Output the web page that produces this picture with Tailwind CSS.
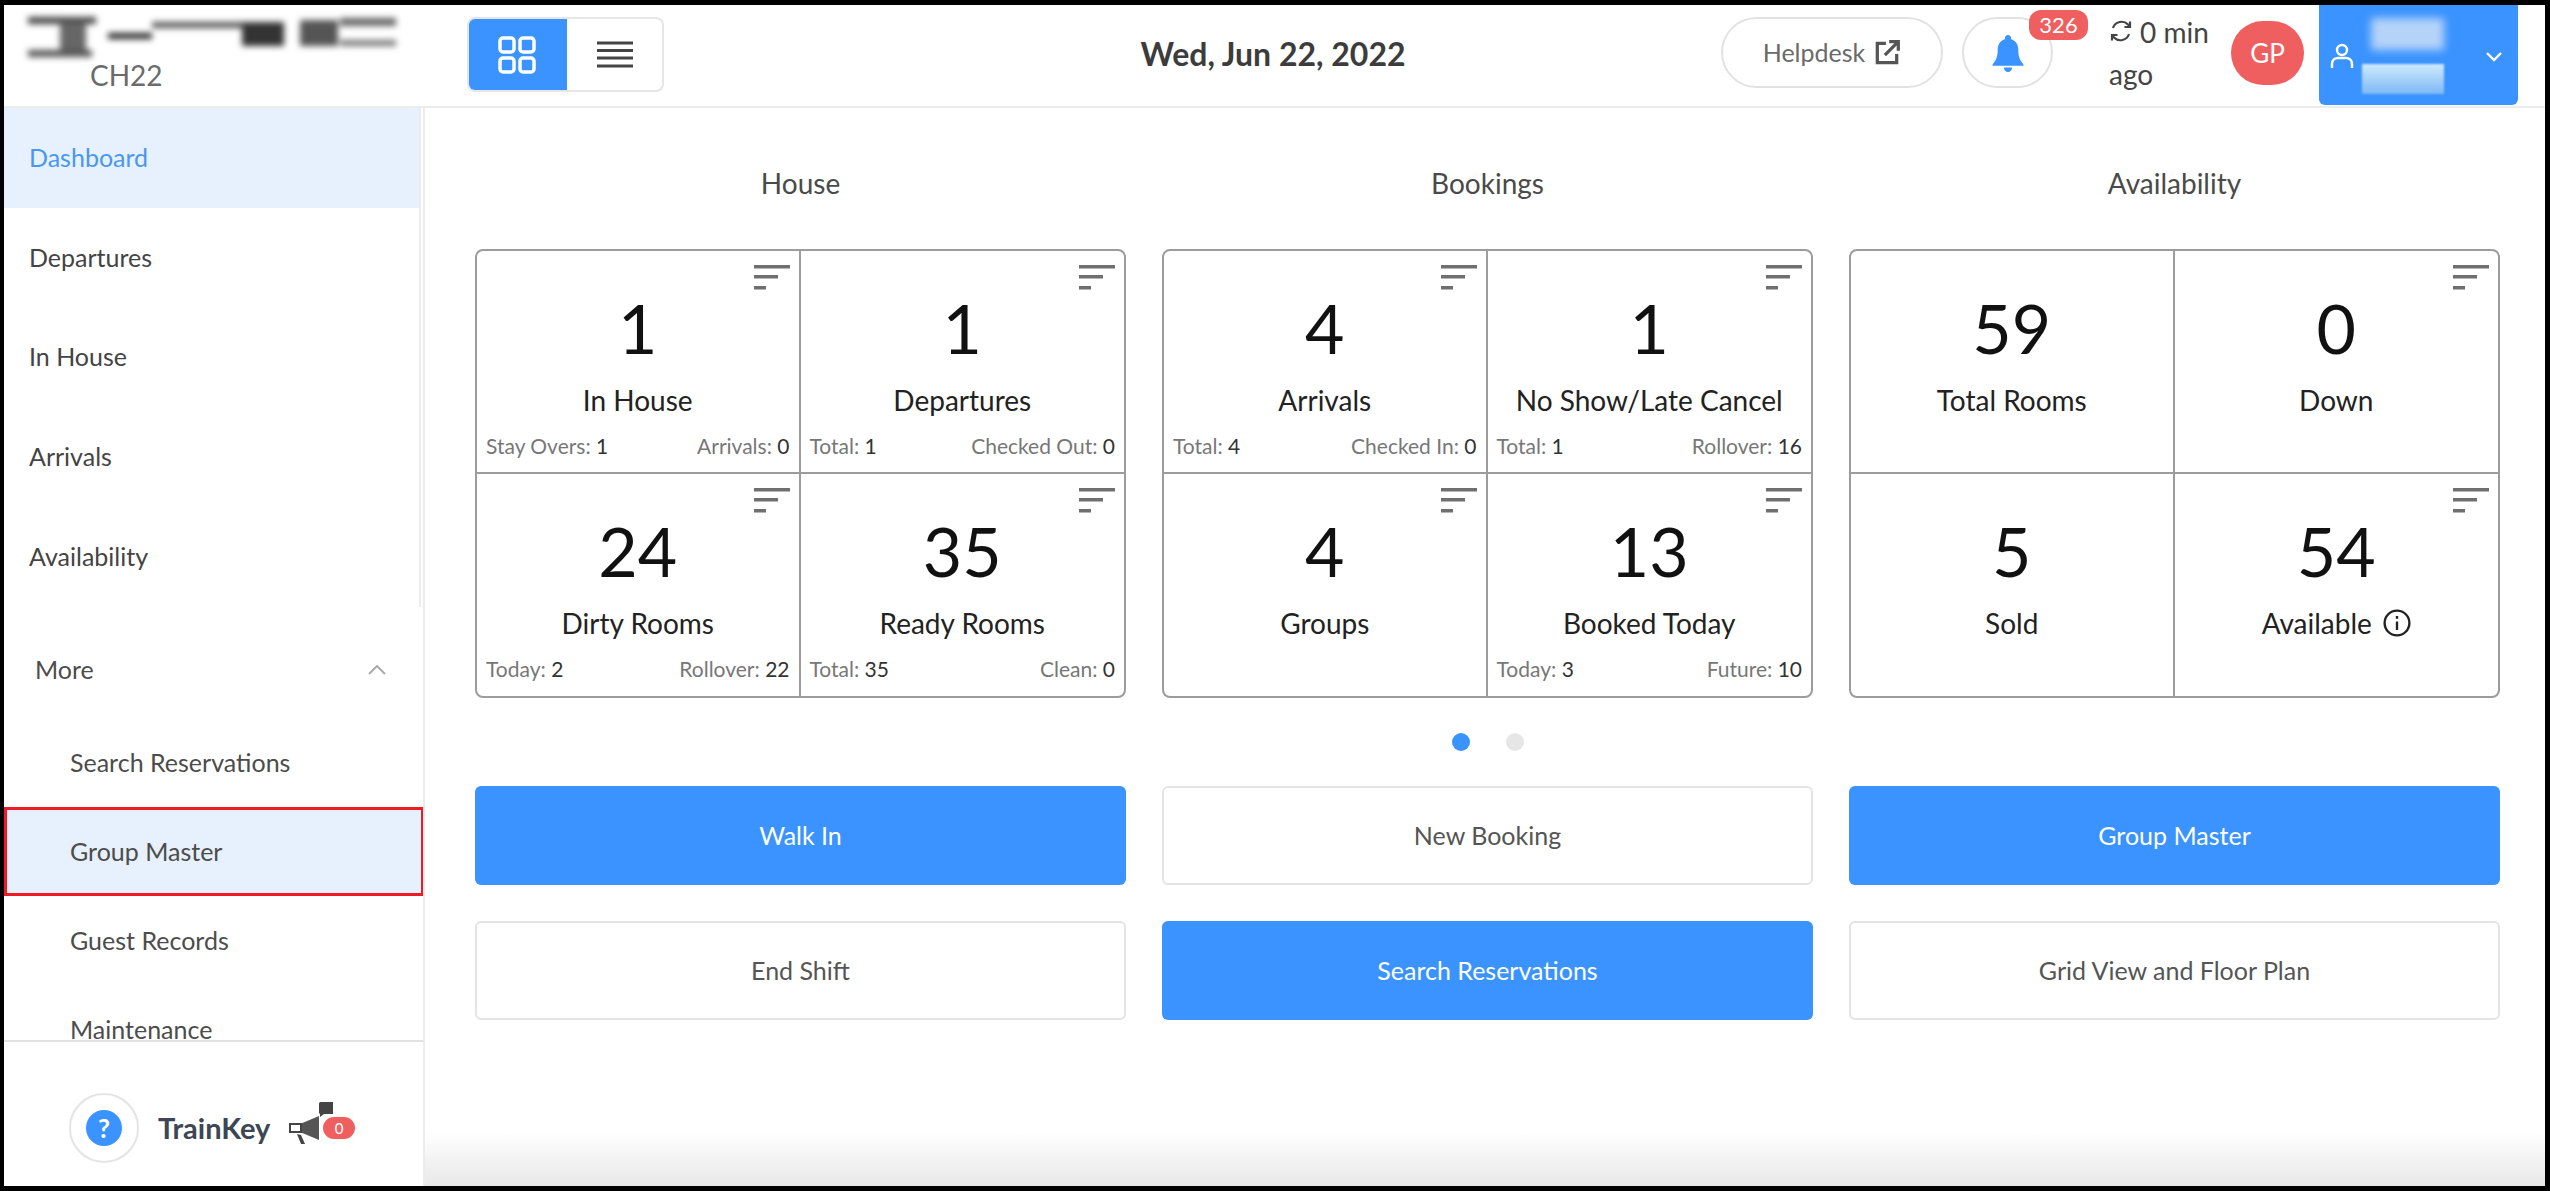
<!DOCTYPE html>
<html lang="en">
<head>
  <meta charset="UTF-8" />
  <title>Dashboard</title>
  <script src="https://cdn.jsdelivr.net/npm/@tailwindcss/browser@4"></script>
</head>
<body class="bg-black">
  <div class="w-[2550px] h-[1191px] bg-black pt-[5px] pb-[5px] pl-[4px] pr-[5px] overflow-hidden font-['Lato','Open_Sans',sans-serif]">
    <div class="w-full h-full bg-white flex flex-col">

      <!-- Header -->
      <header class="h-[103px] shrink-0 flex border-b-2 border-[#ececec] relative">
        <div class="w-[463px] shrink-0 relative">
          <svg width="368" height="44" viewBox="0 0 368 44" class="absolute left-[24px] top-[9px] blur-[3px]">
            <rect x="0" y="3" width="68" height="7" fill="#444"/>
            <rect x="0" y="36" width="64" height="7" fill="#555"/>
            <rect x="32" y="8" width="26" height="28" fill="#666"/>
            <rect x="80" y="19" width="44" height="6" fill="#222"/>
            <rect x="124" y="8" width="110" height="6" fill="#555"/>
            <rect x="214" y="8" width="42" height="24" fill="#333"/>
            <rect x="272" y="6" width="38" height="26" fill="#555"/>
            <rect x="312" y="4" width="56" height="8" fill="#666"/>
            <rect x="312" y="26" width="56" height="6" fill="#777"/>
          </svg>
          <div class="absolute left-[86px] top-[54px] text-[28px] leading-[32px] text-[#6b6b6b]">CH22</div>
        </div>
        <div class="mt-[12px] h-[75px] w-[197px] flex border-2 border-[#e6e6e6] rounded-[8px] overflow-hidden shrink-0">
          <div class="w-[100px] -ml-[2px] -my-[2px] h-[75px] bg-[#3a93fe] flex items-center justify-center">
            <svg width="38" height="38" viewBox="0 0 38 38" fill="none" stroke="#fff" stroke-width="3.5"><rect x="2" y="2" width="14" height="14" rx="3"/><rect x="22" y="2" width="14" height="14" rx="3"/><rect x="2" y="22" width="14" height="14" rx="3"/><rect x="22" y="22" width="14" height="14" rx="3"/></svg>
          </div>
          <div class="flex-1 flex items-center justify-center">
            <svg width="36" height="28" viewBox="0 0 36 28" stroke="#444" stroke-width="3"><path d="M0 2h36M0 9.500h36M0 17h36M0 25h36"/></svg>
          </div>
        </div>
        <div class="flex-1 flex items-center justify-center pl-[161px] pb-[4px] text-[32px] font-bold text-[#3c3c3c]">Wed, Jun 22, 2022</div>
        <div class="mt-[12px] h-[71px] w-[222px] shrink-0 border-2 border-[#e2e2e2] rounded-full flex items-center justify-center gap-[8px] text-[25px] text-[#6a6a6a]">
          Helpdesk
          <svg width="28" height="28" viewBox="0 0 26 26" fill="none" stroke="#555" stroke-width="3"><path d="M12 4H4v18h18v-8"/><path d="M11 15 23 3M15 2.500h8.500V11"/></svg>
        </div>
        <div class="ml-[19px] mt-[12px] h-[71px] w-[91px] shrink-0 border-2 border-[#e2e2e2] rounded-full flex items-center justify-center relative">
          <svg width="32" height="37" viewBox="0 0 30 36" fill="#3a93fe" class="mt-[2px]"><path d="M15 0c1.700 0 3 1.300 3 3v1.200c4.500 1.300 7 5.200 7 10 0 7 1.500 10.500 5 14.300v1.500H0v-1.500c3.500-3.800 5-7.300 5-14.300 0-4.800 2.500-8.700 7-10V3c0-1.700 1.300-3 3-3z"/><path d="M11 31.500h8c0 2.500-1.800 4.500-4 4.500s-4-2-4-4.500z"/></svg>
          <span class="absolute -top-[9px] left-[65px] w-[59px] h-[30px] bg-[#f05f5f] rounded-[12px] text-white text-[22px] leading-[30px] text-center">326</span>
        </div>
        <div class="ml-[56px] w-[115px] shrink-0 relative text-[28px] leading-[42px] text-[#444] pt-[6px]">
          <svg width="24" height="24" viewBox="0 0 24 24" fill="none" stroke="#444" stroke-width="2.200" class="absolute left-[0px] top-[14px]"><path d="M4 9a9 9 0 0 1 15-3.500L21 8M20 15a9 9 0 0 1-15 3.500L3 16"/><path d="M21 2.500V8h-5.500M3 21.500V16h5.500"/></svg>
          <div class="pl-[31px] whitespace-nowrap">0 min</div>
          <div>ago</div>
        </div>
        <div class="ml-[7px] mt-[16px] w-[73px] h-[64px] shrink-0 rounded-full bg-[#f05f5f] text-white text-[26px] flex items-center justify-center">GP</div>
        <div class="ml-[15px] w-[199px] h-[100px] shrink-0 bg-[#3a93fe] rounded-b-[6px] relative z-10">
          <svg width="24" height="26" viewBox="0 0 24 26" fill="none" stroke="#fff" stroke-width="2.400" class="absolute left-[11px] top-[38px]"><circle cx="12" cy="7" r="5"/><path d="M2 25v-4c0-4 3-6 6-6h8c3 0 6 2 6 6v4"/></svg>
          <div class="absolute left-[52px] top-[13px] w-[73px] h-[32px] bg-[#b5d3f9] blur-[4px]"></div>
          <div class="absolute left-[43px] top-[59px] w-[82px] h-[30px] bg-gradient-to-b from-[#cfeafc] to-[#7db9f6] blur-[1px]"></div>
          <svg width="18" height="12" viewBox="0 0 18 12" fill="none" stroke="#fff" stroke-width="2.400" class="absolute left-[166px] top-[46px]"><path d="m2 2 7 7 7-7"/></svg>
        </div>
        <div class="w-[27px] shrink-0"></div>
      </header>

      <div class="flex-1 flex min-h-0">
        <!-- Sidebar -->
        <aside class="w-[421px] shrink-0 flex flex-col border-r-2 border-[#ececec]">
          <div class="flex-1 min-h-0 overflow-hidden">
            <nav class="w-[417px] border-r-2 border-[#ececec] text-[25px] text-[#444] h-[499px]">
              <div class="h-[100px] bg-[#e6f1fd] text-[#4a97f0] flex items-center pl-[25px]">Dashboard</div>
              <div class="h-[99px] flex items-center pl-[25px]">Departures</div>
              <div class="h-[100px] flex items-center pl-[25px]">In House</div>
              <div class="h-[100px] flex items-center pl-[25px]">Arrivals</div>
              <div class="h-[100px] flex items-center pl-[25px]">Availability</div>
            </nav>
            <div class="text-[25px] text-[#4c4c4c]">
              <div class="h-[103px] flex items-center justify-between pl-[31px] pr-[37px] pt-[24px] -mt-[1px]">
                More
                <svg width="18" height="10" viewBox="0 0 18 10" fill="none" stroke="#aaa" stroke-width="2"><path d="m1 9 8-8 8 8"/></svg>
              </div>
              <div class="h-[98px] flex items-center pl-[66px] pt-[10px]">Search Reservations</div>
              <div class="h-[89px] w-[420px] bg-[#e6f1fd] border-[3px] border-[#ed1c24] flex items-center pl-[63px]">Group Master</div>
              <div class="h-[89px] flex items-center pl-[66px]">Guest Records</div>
              <div class="h-[88px] flex items-center pl-[66px] leading-[22px]">Maintenance</div>
            </div>
          </div>
          <div class="h-[146px] shrink-0 border-t-2 border-[#e2e2e2] bg-white flex items-center pl-[65px] pt-[28px] relative">
            <div class="w-[70px] h-[70px] rounded-full border-2 border-[#e4e4e4] flex items-center justify-center">
              <div class="w-[36px] h-[36px] rounded-full bg-[#3a93fe] text-white text-[26px] font-bold leading-[36px] text-center">?</div>
            </div>
            <span class="ml-[19px] text-[29px] font-bold text-[#3c4654]">TrainKey</span>
            <svg width="46" height="44" viewBox="0 0 46 44" class="ml-[17px] -mt-[9px]">
              <rect x="32" y="0" width="15" height="12" rx="1.500" fill="#444"/><path d="M33 12v3l4-3z" fill="#444"/>
              <path d="M32 14v24L13 30H6c-2 0-4-2-4-4s2-4 4-4h7z" fill="#555"/>
              <path d="M3 22h11v8H3z" fill="#fff" stroke="#444" stroke-width="2"/>
              <path d="m10 32 4 10h4l-4-9z" fill="#444"/>
            </svg>
            <span class="absolute left-[319px] top-[75px] w-[32px] h-[22px] bg-[#f05f5f] rounded-full text-white text-[15px] leading-[22px] text-center">0</span>
          </div>
        </aside>

        <!-- Main -->
        <main class="flex-1 pl-[50px] pr-[45px] pt-[57px] relative bg-gradient-to-b from-white from-[95%] to-[#e8e8e8]">
          <div class="grid grid-cols-3 gap-x-[36px]">
            <section>
              <h2 class="text-center text-[28px] leading-[36px] text-[#4a4a4a] mb-[48px]">House</h2>
              <div class="grid grid-cols-2 grid-rows-2 h-[449px] border-2 border-[#9c9c9c] rounded-[8px]">
                <div class="relative border-r-2 border-b-2 border-[#9c9c9c] flex flex-col items-center px-[9px] pt-[34px]">
                  <svg width="36" height="25" viewBox="0 0 36 25" fill="#6f6f6f" class="absolute right-[9px] top-[14px]"><path d="M0 0h36v3.500H0zM0 10h24v3.500H0zM0 21h12v3.500H0z"/></svg>
                  <div class="text-[68px] leading-[86px] text-[#111]">1</div>
                  <div class="text-[28px] leading-[36px] text-[#222] mt-[11px]">In House</div>
                  <div class="w-full flex justify-between text-[21px] leading-[24px] text-[#777] mt-[16px]"><span>Stay Overs: <b class="font-normal text-[#333]">1</b></span><span>Arrivals: <b class="font-normal text-[#333]">0</b></span></div>
                </div>
                <div class="relative border-b-2 border-[#9c9c9c] flex flex-col items-center px-[9px] pt-[34px]">
                  <svg width="36" height="25" viewBox="0 0 36 25" fill="#6f6f6f" class="absolute right-[9px] top-[14px]"><path d="M0 0h36v3.500H0zM0 10h24v3.500H0zM0 21h12v3.500H0z"/></svg>
                  <div class="text-[68px] leading-[86px] text-[#111]">1</div>
                  <div class="text-[28px] leading-[36px] text-[#222] mt-[11px]">Departures</div>
                  <div class="w-full flex justify-between text-[21px] leading-[24px] text-[#777] mt-[16px]"><span>Total: <b class="font-normal text-[#333]">1</b></span><span>Checked Out: <b class="font-normal text-[#333]">0</b></span></div>
                </div>
                <div class="relative border-r-2 border-[#9c9c9c] flex flex-col items-center px-[9px] pt-[34px]">
                  <svg width="36" height="25" viewBox="0 0 36 25" fill="#6f6f6f" class="absolute right-[9px] top-[14px]"><path d="M0 0h36v3.500H0zM0 10h24v3.500H0zM0 21h12v3.500H0z"/></svg>
                  <div class="text-[68px] leading-[86px] text-[#111]">24</div>
                  <div class="text-[28px] leading-[36px] text-[#222] mt-[11px]">Dirty Rooms</div>
                  <div class="w-full flex justify-between text-[21px] leading-[24px] text-[#777] mt-[16px]"><span>Today: <b class="font-normal text-[#333]">2</b></span><span>Rollover: <b class="font-normal text-[#333]">22</b></span></div>
                </div>
                <div class="relative flex flex-col items-center px-[9px] pt-[34px]">
                  <svg width="36" height="25" viewBox="0 0 36 25" fill="#6f6f6f" class="absolute right-[9px] top-[14px]"><path d="M0 0h36v3.500H0zM0 10h24v3.500H0zM0 21h12v3.500H0z"/></svg>
                  <div class="text-[68px] leading-[86px] text-[#111]">35</div>
                  <div class="text-[28px] leading-[36px] text-[#222] mt-[11px]">Ready Rooms</div>
                  <div class="w-full flex justify-between text-[21px] leading-[24px] text-[#777] mt-[16px]"><span>Total: <b class="font-normal text-[#333]">35</b></span><span>Clean: <b class="font-normal text-[#333]">0</b></span></div>
                </div>
              </div>
            </section>

            <section>
              <h2 class="text-center text-[28px] leading-[36px] text-[#4a4a4a] mb-[48px]">Bookings</h2>
              <div class="grid grid-cols-2 grid-rows-2 h-[449px] border-2 border-[#9c9c9c] rounded-[8px]">
                <div class="relative border-r-2 border-b-2 border-[#9c9c9c] flex flex-col items-center px-[9px] pt-[34px]">
                  <svg width="36" height="25" viewBox="0 0 36 25" fill="#6f6f6f" class="absolute right-[9px] top-[14px]"><path d="M0 0h36v3.500H0zM0 10h24v3.500H0zM0 21h12v3.500H0z"/></svg>
                  <div class="text-[68px] leading-[86px] text-[#111]">4</div>
                  <div class="text-[28px] leading-[36px] text-[#222] mt-[11px]">Arrivals</div>
                  <div class="w-full flex justify-between text-[21px] leading-[24px] text-[#777] mt-[16px]"><span>Total: <b class="font-normal text-[#333]">4</b></span><span>Checked In: <b class="font-normal text-[#333]">0</b></span></div>
                </div>
                <div class="relative border-b-2 border-[#9c9c9c] flex flex-col items-center px-[9px] pt-[34px]">
                  <svg width="36" height="25" viewBox="0 0 36 25" fill="#6f6f6f" class="absolute right-[9px] top-[14px]"><path d="M0 0h36v3.500H0zM0 10h24v3.500H0zM0 21h12v3.500H0z"/></svg>
                  <div class="text-[68px] leading-[86px] text-[#111]">1</div>
                  <div class="text-[28px] leading-[36px] text-[#222] mt-[11px] whitespace-nowrap">No Show/Late Cancel</div>
                  <div class="w-full flex justify-between text-[21px] leading-[24px] text-[#777] mt-[16px]"><span>Total: <b class="font-normal text-[#333]">1</b></span><span>Rollover: <b class="font-normal text-[#333]">16</b></span></div>
                </div>
                <div class="relative border-r-2 border-[#9c9c9c] flex flex-col items-center px-[9px] pt-[34px]">
                  <svg width="36" height="25" viewBox="0 0 36 25" fill="#6f6f6f" class="absolute right-[9px] top-[14px]"><path d="M0 0h36v3.500H0zM0 10h24v3.500H0zM0 21h12v3.500H0z"/></svg>
                  <div class="text-[68px] leading-[86px] text-[#111]">4</div>
                  <div class="text-[28px] leading-[36px] text-[#222] mt-[11px]">Groups</div>
                </div>
                <div class="relative flex flex-col items-center px-[9px] pt-[34px]">
                  <svg width="36" height="25" viewBox="0 0 36 25" fill="#6f6f6f" class="absolute right-[9px] top-[14px]"><path d="M0 0h36v3.500H0zM0 10h24v3.500H0zM0 21h12v3.500H0z"/></svg>
                  <div class="text-[68px] leading-[86px] text-[#111]">13</div>
                  <div class="text-[28px] leading-[36px] text-[#222] mt-[11px]">Booked Today</div>
                  <div class="w-full flex justify-between text-[21px] leading-[24px] text-[#777] mt-[16px]"><span>Today: <b class="font-normal text-[#333]">3</b></span><span>Future: <b class="font-normal text-[#333]">10</b></span></div>
                </div>
              </div>
            </section>

            <section>
              <h2 class="text-center text-[28px] leading-[36px] text-[#4a4a4a] mb-[48px]">Availability</h2>
              <div class="grid grid-cols-2 grid-rows-2 h-[449px] border-2 border-[#9c9c9c] rounded-[8px]">
                <div class="relative border-r-2 border-b-2 border-[#9c9c9c] flex flex-col items-center px-[9px] pt-[34px]">
                  <div class="text-[68px] leading-[86px] text-[#111]">59</div>
                  <div class="text-[28px] leading-[36px] text-[#222] mt-[11px]">Total Rooms</div>
                </div>
                <div class="relative border-b-2 border-[#9c9c9c] flex flex-col items-center px-[9px] pt-[34px]">
                  <svg width="36" height="25" viewBox="0 0 36 25" fill="#6f6f6f" class="absolute right-[9px] top-[14px]"><path d="M0 0h36v3.500H0zM0 10h24v3.500H0zM0 21h12v3.500H0z"/></svg>
                  <div class="text-[68px] leading-[86px] text-[#111]">0</div>
                  <div class="text-[28px] leading-[36px] text-[#222] mt-[11px]">Down</div>
                </div>
                <div class="relative border-r-2 border-[#9c9c9c] flex flex-col items-center px-[9px] pt-[34px]">
                  <div class="text-[68px] leading-[86px] text-[#111]">5</div>
                  <div class="text-[28px] leading-[36px] text-[#222] mt-[11px]">Sold</div>
                </div>
                <div class="relative flex flex-col items-center px-[9px] pt-[34px]">
                  <svg width="36" height="25" viewBox="0 0 36 25" fill="#6f6f6f" class="absolute right-[9px] top-[14px]"><path d="M0 0h36v3.500H0zM0 10h24v3.500H0zM0 21h12v3.500H0z"/></svg>
                  <div class="text-[68px] leading-[86px] text-[#111]">54</div>
                  <div class="text-[28px] leading-[36px] text-[#222] mt-[11px] flex items-center gap-[11px]">Available
                    <svg width="28" height="28" viewBox="0 0 26 26" fill="none" stroke="#222" stroke-width="2.200"><circle cx="13" cy="13" r="11.500"/><path d="M13 11.500v8M13 6.500v2.500"/></svg>
                  </div>
                </div>
              </div>
            </section>
          </div>

          <div class="flex justify-center gap-[36px] mt-[35px] mb-[35px] pl-[1px]">
            <span class="w-[18px] h-[18px] rounded-full bg-[#3a93fe]"></span>
            <span class="w-[18px] h-[18px] rounded-full bg-[#e6e6e6]"></span>
          </div>

          <div class="grid grid-cols-3 gap-x-[36px] gap-y-[36px] text-[25px]">
            <div class="h-[99px] rounded-[6px] bg-[#3a93fe] text-white flex items-center justify-center">Walk In</div>
            <div class="h-[99px] rounded-[6px] border-2 border-[#e4e4e4] text-[#555] flex items-center justify-center">New Booking</div>
            <div class="h-[99px] rounded-[6px] bg-[#3a93fe] text-white flex items-center justify-center">Group Master</div>
            <div class="h-[99px] rounded-[6px] border-2 border-[#e4e4e4] text-[#555] flex items-center justify-center">End Shift</div>
            <div class="h-[99px] rounded-[6px] bg-[#3a93fe] text-white flex items-center justify-center">Search Reservations</div>
            <div class="h-[99px] rounded-[6px] border-2 border-[#e4e4e4] text-[#555] flex items-center justify-center">Grid View and Floor Plan</div>
          </div>
        </main>
      </div>
    </div>
  </div>
</body>
</html>
